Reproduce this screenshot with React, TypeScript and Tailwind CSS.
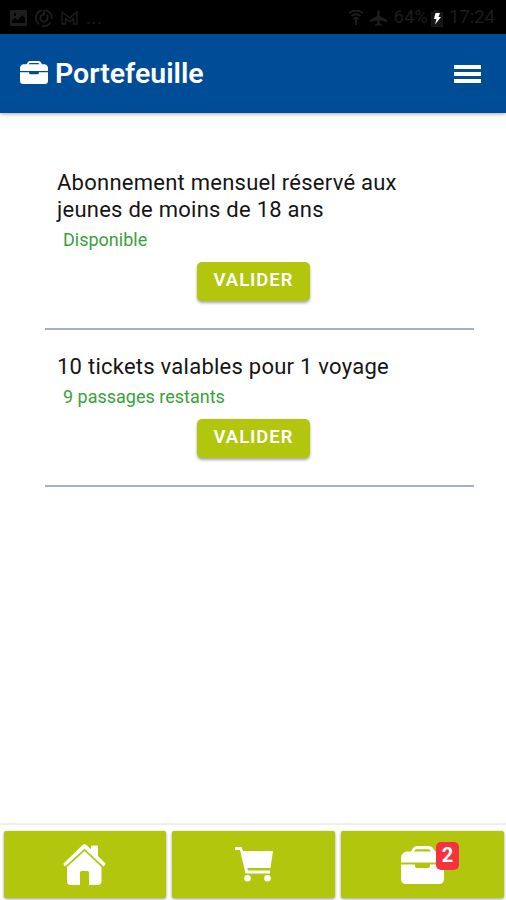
const tickets = [
  {
    title: 'Abonnement mensuel réservé aux jeunes de moins de 18 ans',
    status: 'Disponible',
  },
  {
    title: '10 tickets valables pour 1 voyage',
    status: '9 passages restants',
  },
]

const Briefcase = ({ className }: { className: string }) => (
  <svg viewBox="0 0 43 38" preserveAspectRatio="none" fill="currentColor" className={className}>
    <path
      fillRule="evenodd"
      d="M10 5.5 12 2Q13.5 0 16 0H28Q30.5 0 32 2L34 5.5H38Q43 7 43 12V16.5H0V12Q0 7 5 5.5ZM13 5.5H30Q29 3.3 27 3.3H16Q14 3.3 13 5.5Z"
    />
    <path d="M0 18.5H14V20Q14 22 16 22H27Q29 22 29 20V18.5H43V33Q43 38 38 38H5Q0 38 0 33Z" />
  </svg>
)

const Home = () => (
  <svg viewBox="0 0 43 41" fill="currentColor" className="h-[41px] w-[43px]">
    <path d="M19.5 1Q21.5-.7 23.5 1L28 5.2V2.5Q28 1.5 29 1.5H34Q35 1.5 35 2.5V12L42.5 19.5Q42.5 21 40.5 22.5L21.5 4.8 2 22.5Q.5 21 .5 19.5Z" />
    <path d="M21.5 7 38.5 23V37Q38.5 41 34.5 41H26V28.5Q26 27 24.5 27H18.5Q17 27 17 28.5V41H8Q4 41 4 37V23Z" />
  </svg>
)

const Cart = () => (
  <svg viewBox="0 0 38 35" fill="currentColor" className="h-[35px] w-[38px]">
    <path d="M0 0H6.5L8 4H38L35.5 21H12.3L12.8 23.5H35V26.5H10.5L5 3H0Z" />
    <circle cx="12.5" cy="31.2" r="3.3" />
    <circle cx="32.5" cy="31.2" r="3.3" />
  </svg>
)

const StatusBar = () => (
  <div className="flex h-[34px] shrink-0 items-center justify-between bg-black pt-0.5 pr-[11px] pl-2.5 text-[18.5px] text-[#1d1d1d]">
    <div className="flex items-center gap-2">
      <svg viewBox="0 0 17 16" className="h-4 w-[17px]">
        <path
          fill="currentColor"
          fillRule="evenodd"
          d="M1 0H16L17 1V15L16 16H1L0 15V1ZM2 13H15V8L12 5 8 10 5 8 2 11ZM4 3V6H6V3Z"
        />
      </svg>
      <svg viewBox="0 0 18 18" fill="none" stroke="currentColor" strokeWidth="1.8" className="h-[18px] w-[18px]">
        <path d="M7 1.2A8 8 0 0 0 4 15.3M7 16.8A8 8 0 0 0 15.5 13.5M16.8 10A8 8 0 0 0 10 1.1" />
        <path d="M9 5.5A3.6 3.6 0 1 0 12.5 9V5.5M9 1V6" />
      </svg>
      <svg viewBox="0 0 17 14" fill="none" stroke="currentColor" strokeWidth="1.3" className="h-3.5 w-[17px]">
        <path d="M1 13V1L8.5 7 16 1V13H12.5V7.5L8.5 11 4.5 7.5V13Z" />
      </svg>
      <span className="pt-0.5 tracking-[0.6px]">...</span>
    </div>
    <div className="flex items-center">
      <svg viewBox="0 0 16 16" className="mr-1.5 h-4 w-4">
        <path
          d="M1 3Q8-2 15 3M3.5 6Q8 2.5 12.5 6M5.5 9Q8 7 10.5 9M8 9V15"
          fill="none"
          stroke="currentColor"
          strokeWidth="1.8"
        />
      </svg>
      <svg viewBox="0 0 17 16" fill="currentColor" className="mr-[7px] h-4 w-[17px]">
        <path d="M7.3 1.5Q8.5-1 9.7 1.5V6L17 10V12L9.7 10.3V13L12 15V16L8.5 15.3 5 16V15L7.3 13V10.3L0 12V10L7.3 6Z" />
      </svg>
      <span>64%</span>
      <svg viewBox="0 0 12 17" className="mr-1.5 ml-[3px] h-[17px] w-3">
        <path d="M3 0H9V2H12V17H0V2H3Z" fill="#151515" />
        <path d="M4.5 3H9L7.5 7H10L4 14.5 5.5 9H3Z" fill="#fff" />
      </svg>
      <span>17:24</span>
    </div>
  </div>
)

const App = () => {
  return (
    <div className="flex h-[900px] w-full flex-col bg-white font-['Roboto',sans-serif]">
      <StatusBar />
      <header className="flex h-[79px] shrink-0 items-center bg-[#004c97] pr-[25px] pl-5 text-white shadow-[0_1px_4px_rgba(0,0,0,0.35)]">
        <Briefcase className="mb-[3px] h-[23px] w-7" />
        <h1 className="mt-px ml-[7px] text-[28.5px] font-semibold">Portefeuille</h1>
        <button type="button" aria-label="Menu" className="ml-auto flex w-[27px] flex-col gap-[3px]">
          <span className="h-1 bg-white" />
          <span className="h-1 bg-white" />
          <span className="h-1 bg-white" />
        </button>
      </header>
      <main className="flex-1 pt-[33px] pr-8 pl-[45px]">
        {tickets.map((ticket) => (
          <section
            key={ticket.title}
            className="border-b-2 border-[#a5b0c8] pt-[23px] pb-[27px] pl-3"
          >
            <h2 className="w-[360px] text-[22px] leading-[27px] tracking-[0.25px] text-[#151515]">
              {ticket.title}
            </h2>
            <p className="mt-[5px] ml-1.5 text-[18px] leading-6 text-[#38a338]">
              {ticket.status}
            </p>
            <button
              type="button"
              className="mt-2.5 ml-[140px] block h-[39px] w-[113px] rounded-[5px] bg-[#b1c60c] pb-0.5 text-[18.5px] font-semibold tracking-[0.95px] text-white shadow-[0_2px_3px_rgba(0,0,0,0.35)]"
            >
              VALIDER
            </button>
          </section>
        ))}
      </main>
      <nav className="grid h-[77px] shrink-0 grid-cols-3 gap-[6px] border-t-2 border-[#eeeeee] pt-[6px] pr-0.5 pb-0.5 pl-[3.5px] text-white">
        <a className="flex items-center justify-center rounded-[2px] bg-[#b1c60c] shadow-[0_1px_3px_rgba(0,0,0,0.4)]">
          <Home />
        </a>
        <a className="flex items-center justify-center rounded-[2px] bg-[#b1c60c] shadow-[0_1px_3px_rgba(0,0,0,0.4)]">
          <Cart />
        </a>
        <a className="flex items-center justify-center rounded-[2px] bg-[#b1c60c] shadow-[0_1px_3px_rgba(0,0,0,0.4)]">
          <span className="relative">
            <Briefcase className="h-[38px] w-[43px]" />
            <span className="absolute -top-1 left-[35px] flex h-7 w-[23px] items-center justify-center rounded-[5px] bg-[#f5333f] pb-0.5 text-[20px] font-bold">
              2
            </span>
          </span>
        </a>
      </nav>
    </div>
  )
}

export default App
